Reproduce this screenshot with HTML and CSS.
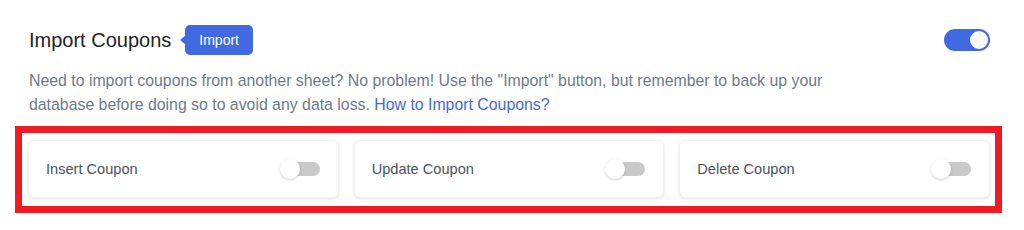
FILE: index.html
```html
<!DOCTYPE html>
<html>
<head>
<meta charset="utf-8">
<link rel="stylesheet" href="styles.css">
</head>
<body>
<section class="panel">
  <div class="head">
    <div class="title-wrap">
      <h2 class="title">Import Coupons</h2>
      <span class="badge">Import</span>
    </div>
    <span class="switch on"><span class="knob"></span></span>
  </div>
  <p class="desc">Need to import coupons from another sheet? No problem! Use the "Import" button, but remember to back up your database before doing so to avoid any data loss. <a class="link" href="#">How to Import Coupons?</a></p>
  <div class="highlight">
    <div class="cards">
      <div class="card"><span class="label">Insert Coupon</span><span class="mini"><span class="mknob"></span></span></div>
      <div class="card"><span class="label">Update Coupon</span><span class="mini"><span class="mknob"></span></span></div>
      <div class="card"><span class="label">Delete Coupon</span><span class="mini"><span class="mknob"></span></span></div>
    </div>
  </div>
</section>
</body>
</html>
```

FILE: styles.css
```css
html, body { margin: 0; padding: 0; background: #ffffff; }
body { font-family: "Liberation Sans", Arial, sans-serif; width: 1024px; height: 230px; overflow: hidden; }
.panel { padding-top: 25px; }
.head { display: flex; align-items: center; justify-content: space-between; padding: 0 34px 0 29px; height: 30px; }
.title-wrap { display: flex; align-items: center; }
.title { margin: 0; font-size: 20px; font-weight: 400; color: #1e2329; line-height: 30px; }
.badge { position: relative; margin-left: 14px; background: #4169e1; color: #fff; font-size: 14px; line-height: 30px; height: 30px; padding: 0 14px; border-radius: 5px; }
.badge::before { content: ""; position: absolute; left: -5px; top: 10px; border-style: solid; border-width: 5px 6px 5px 0; border-color: transparent #4169e1 transparent transparent; }
.switch { display: inline-flex; align-items: center; justify-content: flex-end; width: 46px; height: 22px; border-radius: 11px; background: #4169e1; box-sizing: border-box; padding: 2px; }
.knob { width: 18px; height: 18px; border-radius: 50%; background: #fff; }
.desc { margin: 14px 0 0 29px; width: 800px; font-size: 15.85px; line-height: 24px; color: #6b7a8c; }
.link { color: #4169e1; text-decoration: none; }
.highlight { margin: 9px 0 0 15px; width: 987px; box-sizing: border-box; border: 7px solid #ed1c24; padding: 7px 5px 8px 6px; }
.cards { display: grid; grid-template-columns: repeat(3, 1fr); gap: 15px; }
.card { display: flex; align-items: center; justify-content: space-between; height: 58px; box-sizing: border-box; padding: 0 18px 0 17px; background: #fff; border: 1px solid #eef0f4; border-radius: 6px; box-shadow: 0 1px 3px rgba(60, 70, 90, 0.15); }
.label { font-size: 14.6px; color: #4a5160; }
.mini { position: relative; display: inline-block; width: 40px; height: 14px; }
.mini::before { content: ""; position: absolute; left: 6px; right: 0; top: 0; bottom: 0; background: #c9c9c9; border-radius: 7px; }
.mknob { position: absolute; left: 0; top: -3px; width: 20px; height: 20px; border-radius: 50%; background: #fff; box-shadow: 0 1px 3px rgba(0, 0, 0, 0.2); }
```
